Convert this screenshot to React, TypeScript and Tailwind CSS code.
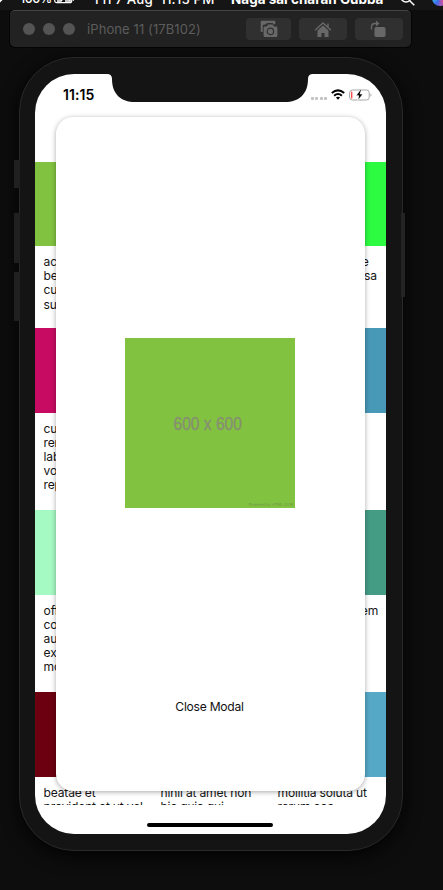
import React from 'react';

type Photo = { color: string; title: string };

const rows: { height: string; photos: Photo[] }[] = [
  {
    height: 'h-[166px]',
    photos: [
      { color: 'bg-[#82c241]', title: 'accusamus beatae ad facilis cum similique qui sunt' },
      { color: 'bg-[#771796]', title: '' },
      { color: 'bg-[#2dfb42]', title: 'officia porro iure quia iusto qui ipsa ut modi' },
    ],
  },
  {
    height: 'h-[182px]',
    photos: [
      { color: 'bg-[#c70b63]', title: 'culpa odio esse rerum omnis laboriosam voluptate repudiandae' },
      { color: 'bg-[#f66b97]', title: '' },
      { color: 'bg-[#4898b8]', title: '' },
    ],
  },
  {
    height: 'h-[182px]',
    photos: [
      { color: 'bg-[#a5f9c3]', title: 'officia delectus consequatur vero aut veniam explicabo molestias' },
      { color: 'bg-[#b0f7cc]', title: '' },
      { color: 'bg-[#449c85]', title: 'qui eius qui autem sed' },
    ],
  },
  {
    height: 'h-[113px]',
    photos: [
      { color: 'bg-[#6c0010]', title: 'beatae et provident et ut vel' },
      { color: 'bg-[#1ee8a4]', title: 'nihil at amet non hic quia qui' },
      { color: 'bg-[#56a8c7]', title: 'mollitia soluta ut rerum eos' },
    ],
  },
];

function MenuBar() {
  return (
    <div className="relative h-[10px] overflow-hidden bg-[#151515] text-[13px] leading-4 text-white">
      <svg className="absolute left-0 top-0" width="3" height="4" viewBox="0 0 3 4">
        <path d="M0 0h2.500L0 2.500Z" fill="#fff" />
      </svg>
      <span className="absolute left-[20px] top-[-9px] whitespace-nowrap text-[12.500px] font-medium tracking-[-0.5px]">100%</span>
      <svg className="absolute left-[54px] top-[-6px]" width="21" height="10" viewBox="0 0 21 10" fill="none" stroke="#fff">
        <rect x="0.7" y="0.7" width="17" height="8" rx="2" strokeWidth="1.2" />
        <path d="M3 7h4l3-4M11 7h5V2" strokeWidth="1.6" />
        <path d="M19.3 3v4" />
      </svg>
      <span className="absolute left-[95px] top-[-9px] whitespace-pre text-[13.300px] font-medium tracking-[0.15px]">Fri 7 Aug  11:15 PM</span>
      <span className="absolute left-[231px] top-[-9px] whitespace-nowrap text-[13.500px] font-bold">Naga sai charan Gubba</span>
      <svg className="absolute left-[400px] top-[-9px]" width="15" height="15" viewBox="0 0 15 15" fill="none" stroke="#fff" strokeWidth="1.5">
        <circle cx="6" cy="6" r="5" />
        <path d="m9.7 9.7 4.600 4.600" />
      </svg>
      <div className="absolute left-[432px] top-[-10px] h-[16px] w-[16px] rounded-full bg-[conic-gradient(#ffffff,#3956f0,#d44fa0,#3a6df0,#45d6dd,#ffffff)]" />
    </div>
  );
}

function TitleBar() {
  return (
    <div className="ml-[10px] flex h-[37px] w-[401px] items-center rounded-[5px] border-t border-[#444] bg-[#222] pl-[13px] pr-[8px] shadow-[0_0_0_1px_#050505]">
      <div className="flex gap-2">
        <i className="h-3 w-3 rounded-full bg-[#545454]" />
        <i className="h-3 w-3 rounded-full bg-[#545454]" />
        <i className="h-3 w-3 rounded-full bg-[#545454]" />
      </div>
      <span className="ml-[12px] flex-1 whitespace-nowrap pt-px text-[13px] tracking-[0.1px] text-[#5c5c5c]">iPhone 11 (17B102)</span>
      <div className="flex gap-2">
        <div className="flex h-[22px] w-[45px] items-center justify-center rounded bg-[#303030]">
          <svg width="18" height="18" viewBox="0 0 18 18" fill="#686868">
            <path d="M1.500.8h13a.8.8 0 0 1 .8.8v2.600H13.600l-1-1.200H6.800l-1 1.600H4.300q-1.600 0-1.600 1.600v5.800H1.500a.8.8 0 0 1-.8-.8V1.600q0-.8.8-.8Z" />
            <path d="M4.800 6.500h2l1.200-2h4.800l1.200 2h2.200q1.200 0 1.200 1.200v8q0 1.200-1.200 1.200H4.800q-1.200 0-1.200-1.200v-8q0-1.200 1.200-1.200Z" />
            <circle cx="10.400" cy="11.400" r="3.200" stroke="#303030" strokeWidth="1.200" />
          </svg>
        </div>
        <div className="flex h-[22px] w-[48px] items-center justify-center rounded bg-[#303030]">
          <svg width="18" height="17" viewBox="0 0 18 17">
            <path d="m1 9.2 8-7.2 8 7.2M14 2.500v4" fill="none" stroke="#686868" strokeWidth="1.400" />
            <path d="M3.500 9.500 9 4.600l5.500 4.900V16h-4v-4h-3v4h-4Z" fill="#686868" />
          </svg>
        </div>
        <div className="flex h-[22px] w-[48px] items-center justify-center rounded bg-[#303030]">
          <svg width="18" height="18" viewBox="0 0 18 18">
            <rect x="4.500" y="7" width="11" height="10" rx="1.700" fill="#686868" />
            <path d="M1.500 9.500V7Q1.500 3.500 5 3.500H6.500" fill="none" stroke="#686868" strokeWidth="1.300" />
            <path d="M6 .6 9.500 3.500 6 6.400Z" fill="#686868" />
          </svg>
        </div>
      </div>
    </div>
  );
}

function StatusBar() {
  return (
    <div className="flex h-[42px] items-center justify-between pb-px pl-[28px] pr-[14px]">
      <span className="text-[14px] font-semibold tracking-[0.1px] text-black">11:15</span>
      <div className="flex items-center gap-[4px]">
        <div className="flex gap-[1.500px] pt-[7px]">
          <i className="h-[3px] w-[3px] rounded-[1px] bg-[#c2c2c2]" />
          <i className="h-[3px] w-[3px] rounded-[1px] bg-[#c2c2c2]" />
          <i className="h-[3px] w-[3px] rounded-[1px] bg-[#c2c2c2]" />
          <i className="h-[3px] w-[3px] rounded-[1px] bg-[#c2c2c2]" />
        </div>
        <svg width="14" height="11" viewBox="0 0 14 11" fill="none" stroke="#000" strokeWidth="2">
          <path d="M.8 4.100q6.200-5.400 12.400 0M3.100 6.700q3.900-3.400 7.800 0" />
          <path d="M4.900 8.500q2.100-1.700 4.200 0L7 10.700Z" fill="#000" stroke="none" />
        </svg>
        <svg width="23" height="12" viewBox="0 0 23 12">
          <rect x=".6" y="1" width="19.600" height="10" rx="2.800" fill="#fff" stroke="#a6a6a6" />
          <path d="M21.500 4.200q1.800 1.800 0 3.600Z" fill="#999" />
          <rect x="2" y="2.500" width="1.400" height="7" rx=".6" fill="#ff4d4b" />
          <path d="M11.500.5 7 6.700h2.700L8.800 11.500 14 5h-2.900L12.500.5Z" fill="#000" stroke="#fff" strokeWidth=".7" />
        </svg>
      </div>
    </div>
  );
}

function Gallery() {
  return (
    <div className="mt-[46px] h-[643px] overflow-hidden">
      {rows.map((row, r) => (
        <div key={r} className={`grid grid-cols-3 ${row.height}`}>
          {row.photos.map((photo, c) => (
            <div key={c}>
              <div className={`${r === 0 ? 'h-[84px]' : 'h-[84.500px]'} ${photo.color}`} />
              <p className="pl-[8.600px] pr-[7px] pt-[9px] text-[12.100px] leading-[14.200px] tracking-[-0.2px] text-[#151515]">{photo.title}</p>
            </div>
          ))}
        </div>
      ))}
    </div>
  );
}

function Modal() {
  return (
    <div className="absolute left-[21px] top-[43px] flex h-[674px] w-[309px] flex-col items-center rounded-[17px] bg-white shadow-[0_1px_5px_rgba(0,0,0,0.34)]">
      <div className="relative mr-[1px] mt-[221px] flex h-[170px] w-[170px] items-center justify-center bg-[#82c241]">
        <span className="mr-[4px] scale-x-[0.820] whitespace-nowrap pt-[3px] font-['Liberation_Sans',sans-serif] text-[19px] text-[#868e73] [-webkit-text-stroke:0.300px_#868e73]">600 x 600</span>
        <span className="absolute bottom-[1px] right-[2px] whitespace-nowrap font-['DejaVu_Sans',sans-serif] text-[4px] leading-[5px] tracking-[-0.1px] text-[#6f9a44]">Powered by HTML.COM</span>
      </div>
      <button className="mr-[2px] mt-[190px] text-[12.100px] leading-[18px] tracking-[-0.25px] text-[#111]">Close Modal</button>
    </div>
  );
}

export default function App() {
  return (
    <div className="h-[890px] w-[443px] overflow-hidden bg-[#0d0d0d] font-['Inter',sans-serif]">
      <MenuBar />
      <TitleBar />
      <div className="relative ml-[19px] mt-[10px] h-[794px] w-[383.500px] rounded-[55px] border border-[#292929] bg-[#141414] px-[15px] pt-[16px] shadow-[0_5px_18px_#030303]">
        <i className="absolute left-[-6px] top-[102px] h-[28px] w-[6px] bg-[#202020]" />
        <i className="absolute left-[-6px] top-[155px] h-[50px] w-[6px] bg-[#202020]" />
        <i className="absolute left-[-6px] top-[214px] h-[49px] w-[6px] bg-[#202020]" />
        <i className="absolute right-[-3px] top-[155px] h-[84px] w-[4px] bg-[#242424]" />
        <div className="relative h-[760px] w-[351px] overflow-hidden rounded-[39px] bg-white">
          <StatusBar />
          <svg className="absolute left-[72px] top-0" width="206" height="28" viewBox="0 0 206 28">
            <path d="M0 0Q5 0 5 5C5 20 14 28 28 28H178C192 28 201 20 201 5Q201 0 206 0Z" fill="#141414" />
          </svg>
          <Gallery />
          <Modal />
          <div className="absolute bottom-[7px] left-[112px] h-[4px] w-[126px] rounded-full bg-black" />
        </div>
      </div>
    </div>
  );
}
